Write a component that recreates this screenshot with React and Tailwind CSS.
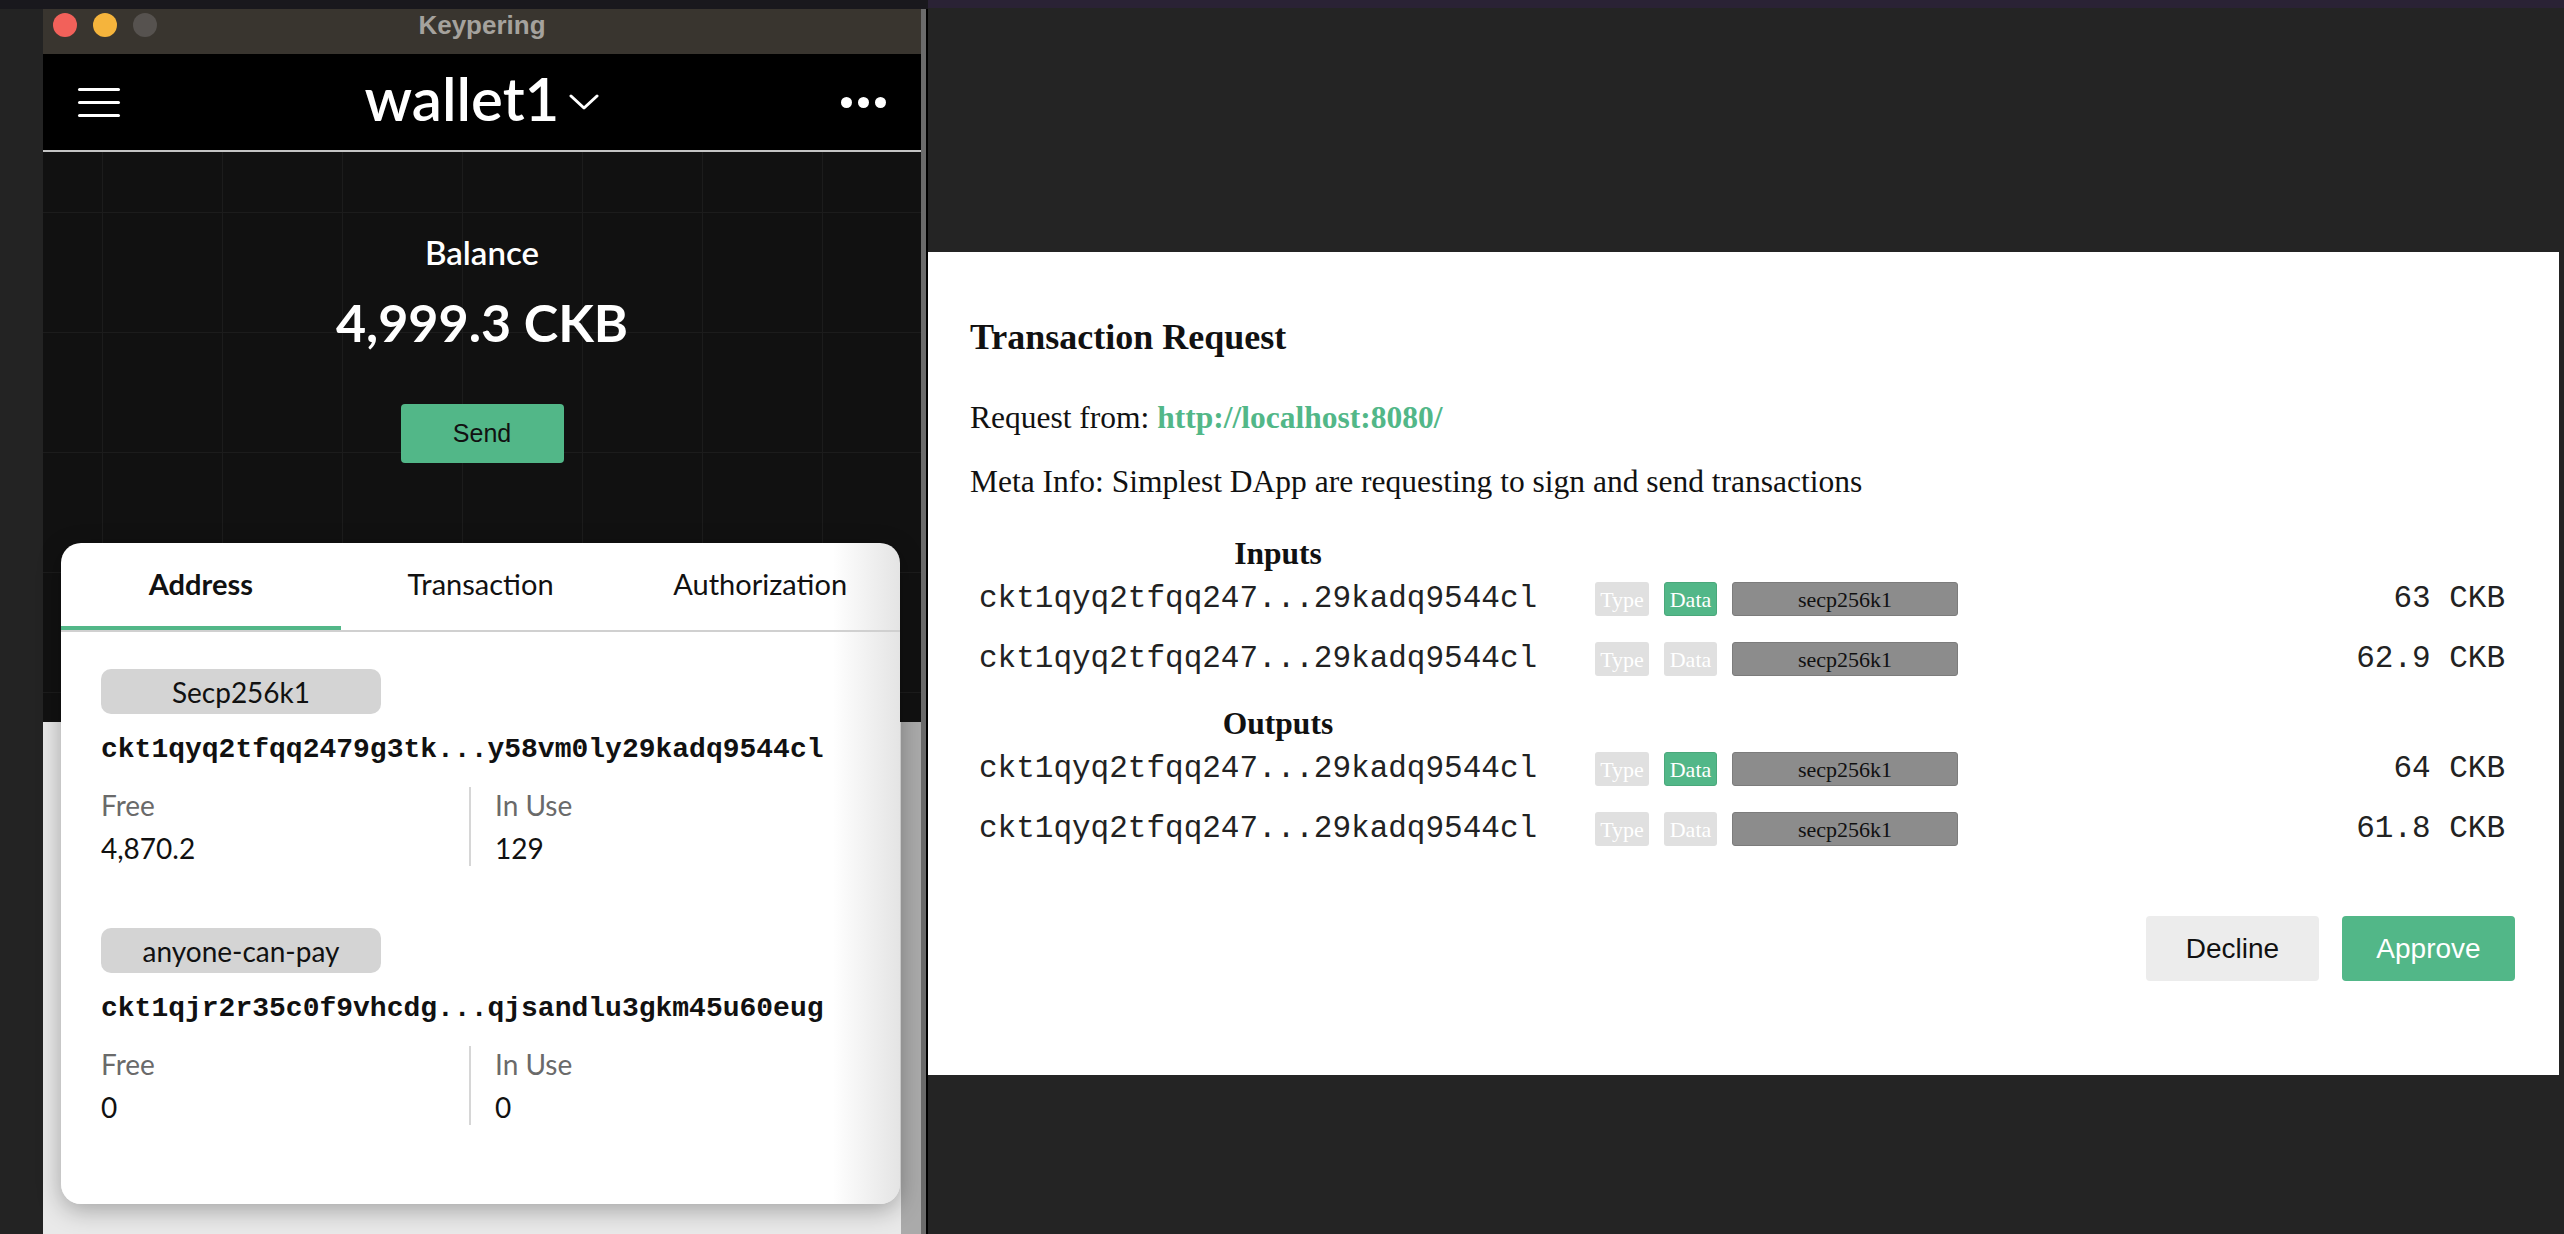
import React from 'react';

const rows = {
  inputs: [
    { data: true, amount: '63 CKB' },
    { data: false, amount: '62.9 CKB' },
  ],
  outputs: [
    { data: true, amount: '64 CKB' },
    { data: false, amount: '61.8 CKB' },
  ],
};

const addresses = [
  { lock: 'Secp256k1', address: 'ckt1qyq2tfqq2479g3tk...y58vm0ly29kadq9544cl', free: '4,870.2', inUse: '129' },
  { lock: 'anyone-can-pay', address: 'ckt1qjr2r35c0f9vhcdg...qjsandlu3gkm45u60eug', free: '0', inUse: '0' },
];

function AddressBlock({ item, first }) {
  return (
    <div className={first ? 'pt-[37px]' : 'pt-[62px]'}>
      <div className="w-[280px] h-[45px] rounded-[10px] bg-[#d4d4d4] flex items-center justify-center text-[28px] text-[#111]">
        {item.lock}
      </div>
      <div className="mt-[18px] h-[36px] leading-[36px] font-['Liberation_Mono',monospace] font-bold text-[28px] text-[#111]">
        {item.address}
      </div>
      <div className="mt-[19px] flex">
        <div className="w-[368px]">
          <div className="leading-[36px] text-[28px] text-[#6a6a6a]">Free</div>
          <div className="mt-[7px] leading-[36px] text-[28px] text-[#111]">{item.free}</div>
        </div>
        <div className="border-l-2 border-[#d6d6d6] pl-[24px]">
          <div className="leading-[36px] text-[28px] text-[#6a6a6a]">In Use</div>
          <div className="mt-[7px] leading-[36px] text-[28px] text-[#111]">{item.inUse}</div>
        </div>
      </div>
    </div>
  );
}

function KeyperingWindow() {
  return (
    <div className="w-[878px] flex flex-col font-['Lato',sans-serif]">
      {/* title bar */}
      <div className="h-[45px] bg-[#39352f]">
        <div className="h-[31px] grid grid-cols-[1fr_auto_1fr] items-center">
          <div className="flex items-center gap-[16px] pl-[10px]">
            <span className="w-[24px] h-[24px] rounded-full bg-[#f2615a]" />
            <span className="w-[24px] h-[24px] rounded-full bg-[#f5b43c]" />
            <span className="w-[24px] h-[24px] rounded-full bg-[#56524f]" />
          </div>
          <div className="font-['Liberation_Sans',sans-serif] font-bold text-[26px] leading-[30px] text-[#a5a29d]">Keypering</div>
          <div />
        </div>
      </div>

      {/* header */}
      <div className="h-[98px] bg-black border-b-2 border-[#c4c4c4] grid grid-cols-[1fr_auto_1fr] items-center px-[35px]">
        <div className="flex flex-col gap-[10px] w-[42px]">
          <span className="h-[3px] rounded-full bg-white" />
          <span className="h-[3px] rounded-full bg-white" />
          <span className="h-[3px] rounded-full bg-white" />
        </div>
        <div className="flex items-center gap-[10px] text-white">
          <span className="text-[60px] font-semibold leading-none pb-[8px]">wallet1</span>
          <svg width="30" height="18" viewBox="0 0 30 18" fill="none">
            <polyline points="2,3 15,15 28,3" stroke="white" strokeWidth="3" strokeLinecap="round" strokeLinejoin="round" />
          </svg>
        </div>
        <div className="flex justify-end gap-[6px]">
          <span className="w-[11px] h-[11px] rounded-full bg-white" />
          <span className="w-[11px] h-[11px] rounded-full bg-white" />
          <span className="w-[11px] h-[11px] rounded-full bg-white" />
        </div>
      </div>

      {/* balance hero */}
      <div className="h-[570px] bg-[#111111] bg-[linear-gradient(#1c1c1c_1px,transparent_1px),linear-gradient(90deg,#1c1c1c_1px,transparent_1px)] bg-size-[120px_120px] bg-position-[59px_60px] flex flex-col items-center pt-[82px]">
        <div className="text-[33px] leading-[36px] font-semibold text-white">Balance</div>
        <div className="mt-[22px] text-[52px] leading-[60px] font-bold text-white">4,999.3 CKB</div>
        <button className="mt-[52px] w-[163px] h-[59px] rounded-[4px] bg-[#52b788] font-['Liberation_Sans',sans-serif] text-[25px] text-[#111]">
          Send
        </button>
      </div>

      {/* lower area with the address card */}
      <div className="flex-1 flex">
        <div className="flex-1 bg-[#e9e9e9] pl-[18px]">
          <div className="relative -mt-[179px] w-[839px] h-[661px] rounded-[20px] bg-[linear-gradient(to_right,#ffffff_92%,#e4e4e4)] shadow-[0_6px_24px_rgba(0,0,0,0.3)] overflow-hidden">
            <div className="flex border-b-2 border-[#d0d0d0]">
              <div className="flex-1 h-[87px] pt-[24px] text-center border-b-4 border-[#52b788] text-[29px] leading-[34px] font-bold text-[#111]">Address</div>
              <div className="flex-1 h-[87px] pt-[24px] text-center border-b-4 border-transparent text-[29px] leading-[34px] text-[#111]">Transaction</div>
              <div className="flex-1 h-[87px] pt-[24px] text-center border-b-4 border-transparent text-[29px] leading-[34px] text-[#111]">Authorization</div>
            </div>
            <div className="px-[40px]">
              {addresses.map((a, i) => (
                <AddressBlock key={a.lock} item={a} first={i === 0} />
              ))}
            </div>
          </div>
        </div>
        <div className="w-[20px] bg-[#aaaaaa]" />
      </div>
    </div>
  );
}

function TxRow({ data, amount }) {
  return (
    <div className="flex items-center h-[60px] pl-[51px] pr-[54px]">
      <div className="w-[598px] font-['Liberation_Mono',monospace] text-[31px] text-[#222]">ckt1qyq2tfqq247...29kadq9544cl</div>
      <div className="ml-[18px] flex gap-[15px] text-[22px]">
        <div className="w-[54px] h-[34px] rounded-[3px] bg-[#e0e0e0] text-white flex items-center justify-center">Type</div>
        <div className={data ? 'w-[53px] h-[34px] rounded-[3px] bg-[#52b788] border border-[#4aa87b] text-white flex items-center justify-center' : 'w-[53px] h-[34px] rounded-[3px] bg-[#e0e0e0] text-white flex items-center justify-center'}>Data</div>
        <div className="w-[226px] h-[34px] rounded-[3px] bg-[#8c8c8c] border border-[#7c7c7c] text-[#111] flex items-center justify-center">secp256k1</div>
      </div>
      <div className="flex-1 text-right font-['Liberation_Mono',monospace] text-[31px] text-[#222]">{amount}</div>
    </div>
  );
}

function RequestPanel() {
  return (
    <div className="w-[1631px] h-[823px] bg-white font-['Liberation_Serif',serif] text-[#111] pt-[65px]">
      <div className="pl-[42px] text-[36px] leading-[40px] font-bold">Transaction Request</div>
      <div className="pl-[42px] mt-[44px] text-[31.5px] leading-[34px]">
        Request from: <span className="font-bold text-[#52b788]">http://localhost:8080/</span>
      </div>
      <div className="pl-[42px] mt-[30px] text-[31.5px] leading-[34px]">
        Meta Info: Simplest DApp are requesting to sign and send transactions
      </div>

      <div className="mt-[40px] pl-[51px]">
        <div className="w-[598px] text-center text-[31.5px] leading-[30px] font-bold">Inputs</div>
      </div>
      {rows.inputs.map((r, i) => (
        <TxRow key={i} {...r} />
      ))}
      <div className="mt-[20px] pl-[51px]">
        <div className="w-[598px] text-center text-[31.5px] leading-[30px] font-bold">Outputs</div>
      </div>
      {rows.outputs.map((r, i) => (
        <TxRow key={i} {...r} />
      ))}

      <div className="mt-[57px] pr-[44px] flex justify-end gap-[23px] font-['Liberation_Sans',sans-serif] text-[28px]">
        <button className="w-[173px] h-[65px] rounded-[4px] bg-[#ececec] text-[#111]">Decline</button>
        <button className="w-[173px] h-[65px] rounded-[4px] bg-[#52b788] text-white">Approve</button>
      </div>
    </div>
  );
}

export default function App() {
  return (
    <div className="w-[2564px] h-[1234px] flex overflow-hidden bg-[#242424]">
      <div className="w-[928px] flex flex-col">
        <div className="h-[9px] bg-[#19181d]" />
        <div className="flex-1 flex">
          <div className="w-[43px] bg-[#232323]" />
          <KeyperingWindow />
          <div className="w-[5px] bg-[#6b6b6b]" />
          <div className="w-[2px] bg-black" />
        </div>
      </div>
      <div className="flex-1 flex flex-col">
        <div className="h-[8px] bg-[#2a2235]" />
        <div className="mt-[244px] flex">
          <RequestPanel />
        </div>
      </div>
    </div>
  );
}
